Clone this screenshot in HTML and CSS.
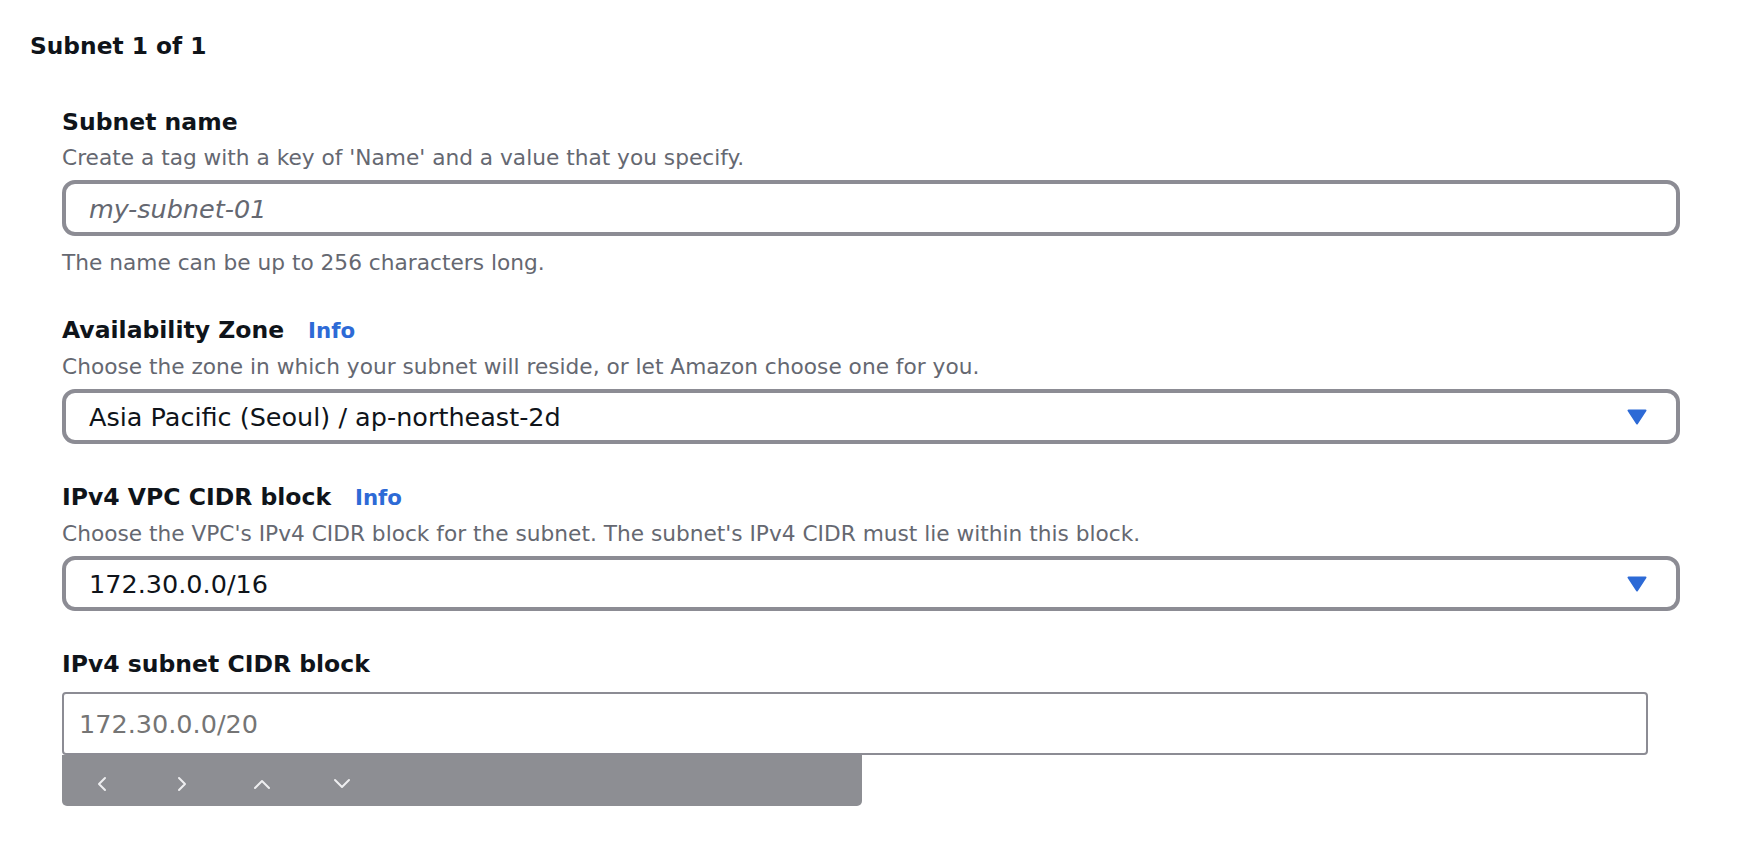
FILE: index.html
```html
<!DOCTYPE html>
<html lang="en">
<head>
<meta charset="utf-8">
<title>Subnet settings</title>
<link rel="stylesheet" href="styles.css">
</head>
<body>
<div class="page">
  <h3 class="title">Subnet 1 of 1</h3>
  <div class="fields">
    <div class="field">
      <div class="label">Subnet name</div>
      <div class="desc">Create a tag with a key of 'Name' and a value that you specify.</div>
      <div class="control input"><span class="placeholder">my-subnet-01</span></div>
      <div class="hint">The name can be up to 256 characters long.</div>
    </div>
    <div class="field">
      <div class="label">Availability Zone<span class="info">Info</span></div>
      <div class="desc">Choose the zone in which your subnet will reside, or let Amazon choose one for you.</div>
      <div class="control select">
        <span class="value">Asia Pacific (Seoul) / ap-northeast-2d</span>
        <svg class="caret" width="20" height="16" viewBox="0 0 20 16"><polygon points="1.5,1.5 18.5,1.5 10,14.5" fill="#2d6ad6" stroke="#2d6ad6" stroke-width="2" stroke-linejoin="round"/></svg>
      </div>
    </div>
    <div class="field">
      <div class="label">IPv4 VPC CIDR block<span class="info">Info</span></div>
      <div class="desc">Choose the VPC's IPv4 CIDR block for the subnet. The subnet's IPv4 CIDR must lie within this block.</div>
      <div class="control select">
        <span class="value">172.30.0.0/16</span>
        <svg class="caret" width="20" height="16" viewBox="0 0 20 16"><polygon points="1.5,1.5 18.5,1.5 10,14.5" fill="#2d6ad6" stroke="#2d6ad6" stroke-width="2" stroke-linejoin="round"/></svg>
      </div>
    </div>
    <div class="field">
      <div class="label">IPv4 subnet CIDR block</div>
      <div class="plain-input"><span class="plain-placeholder">172.30.0.0/20</span></div>
      <div class="accessory">
        <div class="acc-btn"><svg width="12" height="16" viewBox="0 0 12 16"><path d="M9 2 L3 8 L9 14" fill="none" stroke="#eeeef0" stroke-width="2" stroke-linecap="round" stroke-linejoin="round"/></svg></div>
        <div class="acc-btn"><svg width="12" height="16" viewBox="0 0 12 16"><path d="M3 2 L9 8 L3 14" fill="none" stroke="#eeeef0" stroke-width="2" stroke-linecap="round" stroke-linejoin="round"/></svg></div>
        <div class="acc-btn"><svg width="20" height="12" viewBox="0 0 20 12"><path d="M3 10 L10 3 L17 10" fill="none" stroke="#eeeef0" stroke-width="2" stroke-linecap="round" stroke-linejoin="round"/></svg></div>
        <div class="acc-btn"><svg width="20" height="12" viewBox="0 0 20 12"><path d="M3 2 L10 9 L17 2" fill="none" stroke="#eeeef0" stroke-width="2" stroke-linecap="round" stroke-linejoin="round"/></svg></div>
      </div>
    </div>
  </div>
</div>
</body>
</html>
```

FILE: styles.css
```css
* {
  box-sizing: border-box;
}

html, body {
  margin: 0;
  background: #ffffff;
}

body {
  font-family: "DejaVu Sans", "Open Sans", sans-serif;
  color: #0f141a;
}

.page {
  padding: 31px 70px 0 30px;
}

.title {
  margin: 0;
  font-size: 23.3px;
  line-height: 30px;
  font-weight: 700;
  color: #0f141a;
}

.fields {
  margin: 46px 0 0 32px;
  display: flex;
  flex-direction: column;
  gap: 38px;
}

.field {
  display: flex;
  flex-direction: column;
}

.label {
  font-size: 23.5px;
  line-height: 30px;
  font-weight: 700;
  color: #0f141a;
}

.info {
  margin-left: 24px;
  font-size: 21.3px;
  font-weight: 700;
  color: #2d6ad6;
}

.desc,
.hint {
  font-size: 21.7px;
  line-height: 28px;
  color: #656871;
}

.desc {
  margin-top: 7px;
}

.hint {
  margin-top: 13px;
}

.control {
  margin-top: 8px;
  border: 4px solid #8c8c94;
  border-radius: 13px;
  background: #ffffff;
  display: flex;
  align-items: center;
  font-size: 25.5px;
}

.input {
  height: 56px;
  padding: 2px 23px 0 23px;
}

.placeholder {
  font-style: italic;
  color: #656871;
}

.select {
  height: 55px;
  padding: 0 29px 0 23px;
  justify-content: space-between;
}

.value {
  color: #0f141a;
}

.caret {
  display: block;
}

.plain-input {
  margin-top: 13px;
  margin-right: 32px;
  height: 63px;
  border: 2px solid #8c8c94;
  border-radius: 4px;
  padding: 0 15px;
  display: flex;
  align-items: center;
  font-size: 25.5px;
}

.plain-placeholder {
  color: #757575;
}

.accessory {
  width: 800px;
  height: 51px;
  padding-top: 6px;
  background: #8d8e93;
  border-radius: 0 0 5px 5px;
  display: flex;
}

.acc-btn {
  width: 80px;
  height: 45px;
  display: flex;
  align-items: center;
  justify-content: center;
}

.acc-btn svg {
  display: block;
}
```
